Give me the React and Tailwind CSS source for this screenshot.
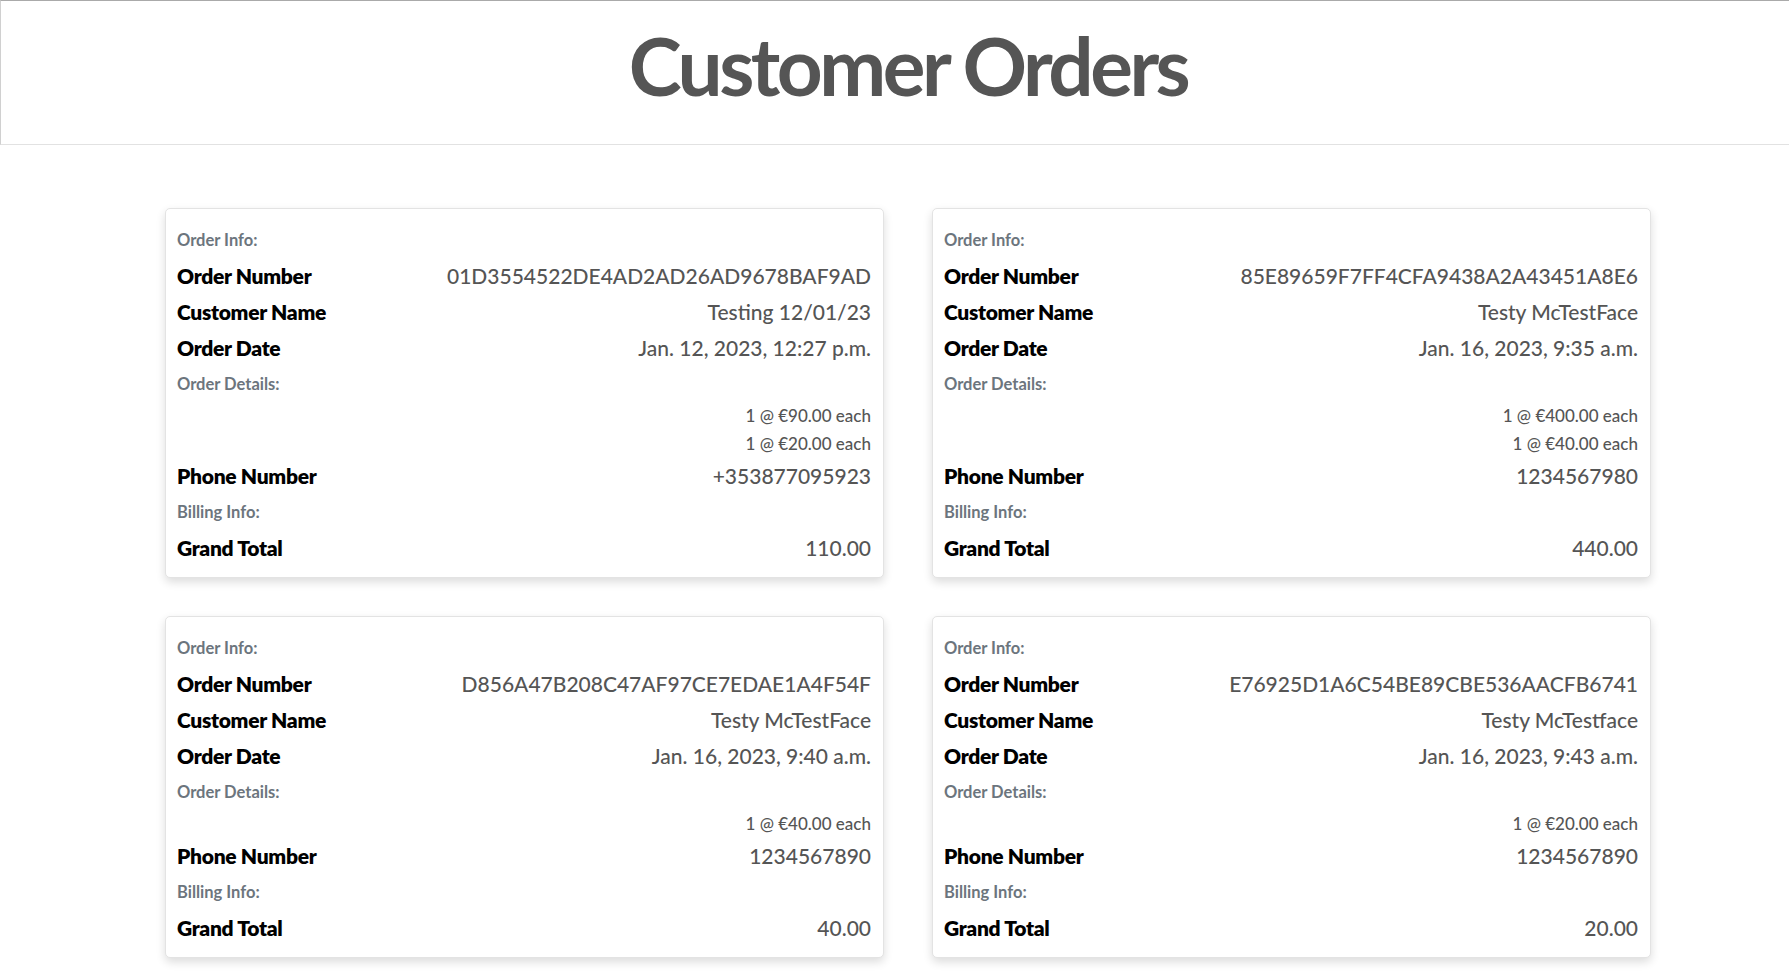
const orders = [
  {
    number: "01D3554522DE4AD2AD26AD9678BAF9AD",
    name: "Testing 12/01/23",
    date: "Jan. 12, 2023, 12:27 p.m.",
    items: ["1 @ €90.00 each", "1 @ €20.00 each"],
    phone: "+353877095923",
    total: "110.00",
  },
  {
    number: "85E89659F7FF4CFA9438A2A43451A8E6",
    name: "Testy McTestFace",
    date: "Jan. 16, 2023, 9:35 a.m.",
    items: ["1 @ €400.00 each", "1 @ €40.00 each"],
    phone: "1234567980",
    total: "440.00",
  },
  {
    number: "D856A47B208C47AF97CE7EDAE1A4F54F",
    name: "Testy McTestFace",
    date: "Jan. 16, 2023, 9:40 a.m.",
    items: ["1 @ €40.00 each"],
    phone: "1234567890",
    total: "40.00",
  },
  {
    number: "E76925D1A6C54BE89CBE536AACFB6741",
    name: "Testy McTestface",
    date: "Jan. 16, 2023, 9:43 a.m.",
    items: ["1 @ €20.00 each"],
    phone: "1234567890",
    total: "20.00",
  },
];

function Muted({ children }) {
  return (
    <div className="h-[36px] leading-[36px] text-[16.5px] font-bold text-[#6c757d]">
      {children}
    </div>
  );
}

function Row({ label, value }) {
  return (
    <div className="h-[36px] leading-[36px] flex justify-between items-baseline">
      <span className="text-[21px] font-extrabold text-black tracking-[-0.3px]">{label}</span>
      <span className="text-[21px] font-medium text-[#555]">{value}</span>
    </div>
  );
}

function OrderCard({ order }) {
  return (
    <div className="w-[719px] bg-white rounded-[5px] border border-[#e3e3e3] shadow-[0_4px_10px_rgba(0,0,0,0.14)] pt-[13px] pb-[11px] pl-[11px] pr-[12px]">
      <Muted>Order Info:</Muted>
      <Row label="Order Number" value={order.number} />
      <Row label="Customer Name" value={order.name} />
      <Row label="Order Date" value={order.date} />
      <Muted>Order Details:</Muted>
      {order.items.map((item, i) => (
        <div
          key={i}
          className="h-[28px] leading-[28px] text-right text-[17px] font-medium text-[#555]"
        >
          {item}
        </div>
      ))}
      <Row label="Phone Number" value={order.phone} />
      <Muted>Billing Info:</Muted>
      <Row label="Grand Total" value={order.total} />
    </div>
  );
}

export default function App() {
  return (
    <div className="min-h-screen bg-white font-['Lato',sans-serif]">
      {/* Header */}
      <header className="h-[145px] pt-[24px] pl-[26px] border-t border-t-[#aaa] border-l border-l-[#d0d0d0] border-b border-b-[#e2e2e2]">
        <h1 className="text-center text-[80px] leading-[80px] font-bold tracking-[-3.5px] text-[#555]">
          Customer Orders
        </h1>
      </header>

      {/* Orders grid */}
      <main className="pt-[63px] pl-[165px] pb-[20px]">
        <div className="grid grid-cols-[719px_719px] gap-x-[48px] gap-y-[38px] items-start">
          {orders.map((o) => (
            <OrderCard key={o.number} order={o} />
          ))}
        </div>
      </main>
    </div>
  );
}
